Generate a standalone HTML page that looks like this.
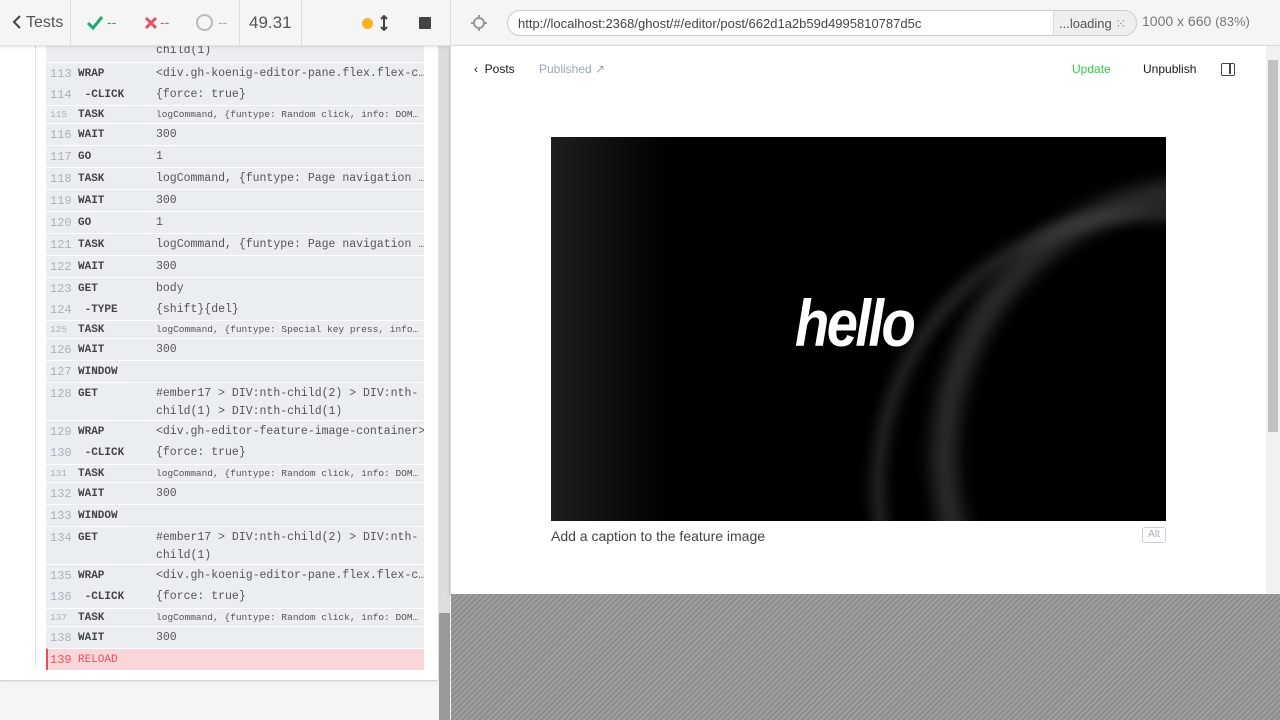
<!DOCTYPE html>
<html><head><meta charset="utf-8"><style>
*{margin:0;padding:0;box-sizing:border-box}
html,body{width:1280px;height:720px;overflow:hidden}
body{background:#f5f5f5;font-family:"Liberation Sans",sans-serif;position:relative}
.abs{position:absolute}
#left{left:0;top:0;width:438px;height:680px;background:#fff;box-shadow:0 1px 2px rgba(0,0,0,.2)}
.row{position:absolute;left:46px;width:378px;background:#ebeef1;border-top:1px solid #fff;font-family:"Liberation Mono",monospace;font-size:11.5px;color:#555;overflow:hidden}
.row span{position:absolute}
.n{left:4px;color:#aab0bb;font-size:12px}
.c{left:32px;font-weight:bold;font-size:11px;color:#444}
.v{left:110px;white-space:nowrap}
.sm .n,.sm .v{font-size:9.5px}
.sm .c{font-size:11px}
</style></head><body>
<div id="left" class="abs">
<div class="abs" style="left:35px;top:46px;height:620px;border-left:1px dotted #ccc"></div>
<div class="row" style="top:46px;height:16px;border:none"><span class="v" style="top:-2px">child(1)</span></div>
<div class="row" style="top:62px;height:44px"><span class="n" style="top:4px">113</span><span class="c" style="top:5px">WRAP</span><span class="v" style="top:4px">&lt;div.gh-koenig-editor-pane.flex.flex-c…</span>
<span class="n" style="top:25px">114</span><span class="c" style="top:26px">&nbsp;-CLICK</span><span class="v" style="top:25px">{force: true}</span></div>
<div class="row sm" style="top:105px;height:18px"><span class="n" style="top:3px">115</span><span class="c" style="top:3px">TASK</span><span class="v" style="top:3px">logCommand, {funtype: Random click, info: DOM…</span></div>
<div class="row" style="top:123px;height:22px"><span class="n" style="top:4px">116</span><span class="c" style="top:5px">WAIT</span><span class="v" style="top:4px">300</span></div>
<div class="row" style="top:145px;height:22px"><span class="n" style="top:4px">117</span><span class="c" style="top:5px">GO</span><span class="v" style="top:4px">1</span></div>
<div class="row" style="top:167px;height:22px"><span class="n" style="top:4px">118</span><span class="c" style="top:5px">TASK</span><span class="v" style="top:4px">logCommand, {funtype: Page navigation …</span></div>
<div class="row" style="top:189px;height:22px"><span class="n" style="top:4px">119</span><span class="c" style="top:5px">WAIT</span><span class="v" style="top:4px">300</span></div>
<div class="row" style="top:211px;height:22px"><span class="n" style="top:4px">120</span><span class="c" style="top:5px">GO</span><span class="v" style="top:4px">1</span></div>
<div class="row" style="top:233px;height:22px"><span class="n" style="top:4px">121</span><span class="c" style="top:5px">TASK</span><span class="v" style="top:4px">logCommand, {funtype: Page navigation …</span></div>
<div class="row" style="top:255px;height:22px"><span class="n" style="top:4px">122</span><span class="c" style="top:5px">WAIT</span><span class="v" style="top:4px">300</span></div>
<div class="row" style="top:277px;height:44px"><span class="n" style="top:4px">123</span><span class="c" style="top:5px">GET</span><span class="v" style="top:4px">body</span>
<span class="n" style="top:25px">124</span><span class="c" style="top:26px">&nbsp;-TYPE</span><span class="v" style="top:25px">{shift}{del}</span></div>
<div class="row sm" style="top:320px;height:18px"><span class="n" style="top:3px">125</span><span class="c" style="top:3px">TASK</span><span class="v" style="top:3px">logCommand, {funtype: Special key press, info…</span></div>
<div class="row" style="top:338px;height:22px"><span class="n" style="top:4px">126</span><span class="c" style="top:5px">WAIT</span><span class="v" style="top:4px">300</span></div>
<div class="row" style="top:360px;height:22px"><span class="n" style="top:4px">127</span><span class="c" style="top:5px">WINDOW</span></div>
<div class="row" style="top:382px;height:38px"><span class="n" style="top:4px">128</span><span class="c" style="top:5px">GET</span><span class="v" style="top:4px">#ember17 &gt; DIV:nth-child(2) &gt; DIV:nth-</span><span class="v" style="top:22px">child(1) &gt; DIV:nth-child(1)</span></div>
<div class="row" style="top:420px;height:44px"><span class="n" style="top:4px">129</span><span class="c" style="top:5px">WRAP</span><span class="v" style="top:4px">&lt;div.gh-editor-feature-image-container&gt;</span>
<span class="n" style="top:25px">130</span><span class="c" style="top:26px">&nbsp;-CLICK</span><span class="v" style="top:25px">{force: true}</span></div>
<div class="row sm" style="top:464px;height:18px"><span class="n" style="top:3px">131</span><span class="c" style="top:3px">TASK</span><span class="v" style="top:3px">logCommand, {funtype: Random click, info: DOM…</span></div>
<div class="row" style="top:482px;height:22px"><span class="n" style="top:4px">132</span><span class="c" style="top:5px">WAIT</span><span class="v" style="top:4px">300</span></div>
<div class="row" style="top:504px;height:22px"><span class="n" style="top:4px">133</span><span class="c" style="top:5px">WINDOW</span></div>
<div class="row" style="top:526px;height:38px"><span class="n" style="top:4px">134</span><span class="c" style="top:5px">GET</span><span class="v" style="top:4px">#ember17 &gt; DIV:nth-child(2) &gt; DIV:nth-</span><span class="v" style="top:22px">child(1)</span></div>
<div class="row" style="top:564px;height:44px"><span class="n" style="top:4px">135</span><span class="c" style="top:5px">WRAP</span><span class="v" style="top:4px">&lt;div.gh-koenig-editor-pane.flex.flex-c…</span>
<span class="n" style="top:25px">136</span><span class="c" style="top:26px">&nbsp;-CLICK</span><span class="v" style="top:25px">{force: true}</span></div>
<div class="row sm" style="top:608px;height:18px"><span class="n" style="top:3px">137</span><span class="c" style="top:3px">TASK</span><span class="v" style="top:3px">logCommand, {funtype: Random click, info: DOM…</span></div>
<div class="row" style="top:626px;height:22px"><span class="n" style="top:4px">138</span><span class="c" style="top:5px">WAIT</span><span class="v" style="top:4px">300</span></div>
<div class="row" style="top:648px;height:22px;background:#f9d6d9;border-left:2px solid #e94f5f"><span class="n" style="top:4px;left:2px;color:#e94f5f">139</span><span class="c" style="top:5px;left:30px;color:#e94f5f;font-weight:normal;font-size:11px">RELOAD</span></div>
</div>
<div class="abs" style="left:439px;top:46px;width:11px;height:674px;background:#ddd"></div>
<div class="abs" style="left:439px;top:613px;width:11px;height:107px;background:#999"></div>
<div class="abs" style="left:0;top:0;width:1280px;height:46px;background:#f5f5f5;border-bottom:1px solid #e3e3e3;box-shadow:0 1px 3px rgba(0,0,0,.12)"></div>
<div class="abs" style="left:0;top:0;width:450px;height:46px;font-size:16px;color:#555">
 <div class="abs" style="left:12px;top:14px"><svg width="10" height="16"><path d="M8 2L2 8l6 6" stroke="#444" stroke-width="2" fill="none"/></svg></div>
 <div class="abs" style="left:26px;top:14px">Tests</div>
 <div class="abs" style="left:70px;top:0;height:46px;border-left:1px solid #ddd"></div>
 <div class="abs" style="left:86px;top:15px"><svg width="18" height="16"><path d="M2 8l5 5 9-11" stroke="#1fa971" stroke-width="3" fill="none"/></svg></div>
 <div class="abs" style="left:107px;top:14px;color:#1fa971;font-size:14px">--</div>
 <div class="abs" style="left:144px;top:16px"><svg width="14" height="14"><path d="M2 2l10 10M12 2L2 12" stroke="#e94f5f" stroke-width="3"/></svg></div>
 <div class="abs" style="left:160px;top:14px;color:#e94f5f;font-size:14px">--</div>
 <div class="abs" style="left:196px;top:14px;width:17px;height:17px;border:2.5px solid #bbb;border-radius:50%"></div>
 <div class="abs" style="left:218px;top:14px;color:#aaa;font-size:14px">--</div>
 <div class="abs" style="left:239px;top:0;height:46px;border-left:1px solid #ddd"></div>
 <div class="abs" style="left:249px;top:13px;font-size:17px;color:#555">49.31</div>
 <div class="abs" style="left:301px;top:0;height:46px;border-left:1px solid #ddd"></div>
 <div class="abs" style="left:362px;top:18px;width:11px;height:11px;background:#fbb121;border-radius:50%"></div>
 <div class="abs" style="left:380px;top:15px"><svg width="8" height="16"><path d="M4 1v14M1 4l3-3 3 3M1 12l3 3 3-3" stroke="#444" stroke-width="2" fill="none"/></svg></div>
 <div class="abs" style="left:419px;top:17px;width:12px;height:12px;background:#444;border-radius:1px"></div>
</div>
<div class="abs" style="left:450px;top:0;height:46px;border-left:1px solid #ddd"></div>
<div class="abs" style="left:471px;top:15px"><svg width="16" height="16"><circle cx="8" cy="8" r="5" stroke="#999" stroke-width="2" fill="none"/><path d="M8 0v4M8 12v4M0 8h4M12 8h4" stroke="#999" stroke-width="2"/></svg></div>
<div class="abs" style="left:507px;top:10px;width:630px;height:26px;border:1px solid #ccc;border-radius:13px;background:#fff;overflow:hidden">
 <div class="abs" style="left:10px;top:5px;font-size:13px;color:#444">http://localhost:2368/ghost/#/editor/post/662d1a2b59d4995810787d5c</div>
 <div class="abs" style="left:545px;top:0;width:85px;height:26px;background:#eee;border-left:1px solid #ddd;font-size:13px;color:#555;padding:5px 0 0 5px">...loading <span style="color:#888">⁙</span></div>
</div>
<div class="abs" style="left:1142px;top:13px;font-size:14px;color:#777">1000 x 660 <span style="font-size:13px">(83%)</span></div>
<div class="abs" style="left:451px;top:46px;width:829px;height:548px;background:#fff;box-shadow:0 2px 4px rgba(0,0,0,.3)"></div>
<div class="abs" style="left:451px;top:594px;width:829px;height:126px;background:repeating-linear-gradient(135deg,#8c8c8c 0 2px,#a0a0a0 2px 4px)"></div>
<div class="abs" style="left:1266px;top:46px;width:14px;height:548px;background:#f1f1f1"></div>
<div class="abs" style="left:1268px;top:60px;width:10px;height:372px;background:#c1c1c1"></div>
<div class="abs" style="left:474px;top:62px;font-size:12px;color:#15171a">&#x2039;&nbsp; Posts</div>
<div class="abs" style="left:539px;top:62px;font-size:12px;color:#9aa5b1">Published ↗</div>
<div class="abs" style="left:1072px;top:62px;font-size:12px;color:#30cf43">Update</div>
<div class="abs" style="left:1143px;top:62px;font-size:12px;color:#15171a">Unpublish</div>
<div class="abs" style="left:1221px;top:63px;width:14px;height:13px;border:1.5px solid #444;border-radius:2px"><div class="abs" style="left:7px;top:0;width:1.5px;height:10px;background:#444"></div></div>
<div class="abs" style="left:551px;top:137px;width:615px;height:384px;background:#000;overflow:hidden">
 <div class="abs" style="left:380px;top:40px;width:560px;height:560px;border-radius:50%;border:26px solid rgba(120,120,120,.35);filter:blur(8px)"></div>
 <div class="abs" style="left:320px;top:70px;width:560px;height:560px;border-radius:50%;border:14px solid rgba(90,90,90,.4);filter:blur(6px)"></div>
 <div class="abs" style="left:0;top:0;width:120px;height:384px;background:linear-gradient(90deg,rgba(60,60,60,.5),rgba(0,0,0,0))"></div>
 <div class="abs" style="left:244px;top:148px;font-size:66px;font-style:italic;font-weight:bold;color:#fff;font-family:'Liberation Sans Narrow','Liberation Sans',sans-serif;letter-spacing:-3px;transform:scaleX(.85);transform-origin:left">hello</div>
</div>
<div class="abs" style="left:551px;top:528px;font-size:14px;color:#444">Add a caption to the feature image</div>
<div class="abs" style="left:1142px;top:527px;width:24px;height:16px;border:1px solid #ccd;border-radius:3px;font-size:10px;color:#aab;text-align:center;line-height:14px">Alt</div>
</body></html>
